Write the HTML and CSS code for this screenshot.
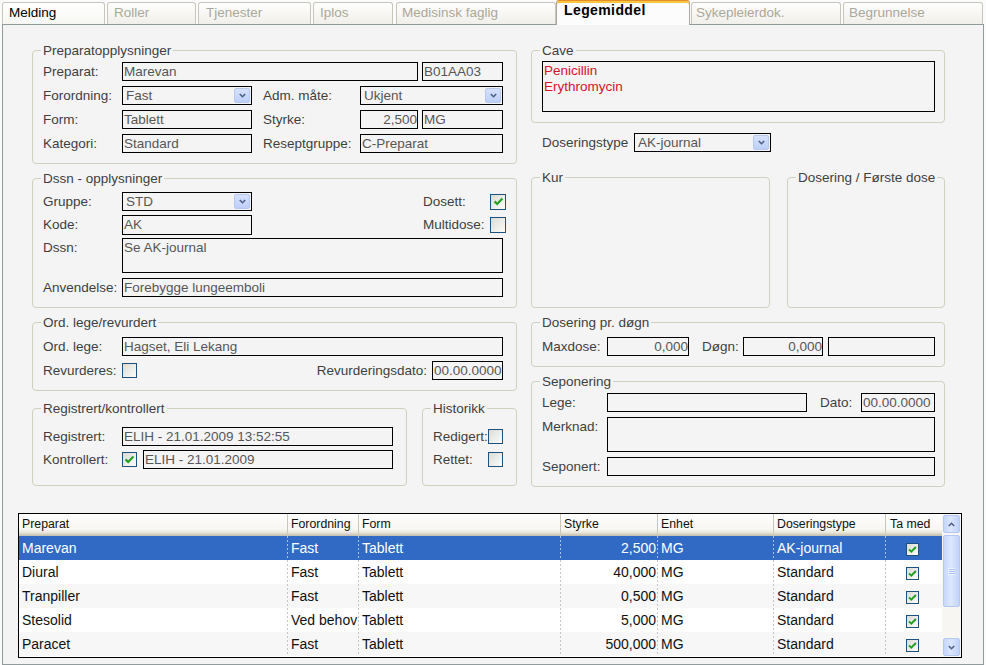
FILE: index.html
```html
<!DOCTYPE html>
<html lang="no">
<head>
<meta charset="utf-8">
<title>Legemiddel</title>
<link rel="stylesheet" href="styles.css">
</head>
<body>
<nav class="tabs">
  <div class="tab t1 enabled">Melding</div>
  <div class="tab t2">Roller</div>
  <div class="tab t3">Tjenester</div>
  <div class="tab t4">Iplos</div>
  <div class="tab t5">Medisinsk faglig</div>
  <div class="tab t6 active">Legemiddel</div>
  <div class="tab t7">Sykepleierdok.</div>
  <div class="tab t8">Begrunnelse</div>
</nav>
<main class="panel">
  <div class="form">
    <div class="col-left">
      <fieldset class="group">
        <legend>Preparatopplysninger</legend>
        <div class="body b-prep">
          <div class="row">
            <span class="lbl w79">Preparat:</span>
            <div class="field w296">Marevan</div>
            <div class="field grow ml4">B01AA03</div>
          </div>
          <div class="row">
            <span class="lbl w79">Forordning:</span>
            <div class="field select w130"><span>Fast</span><span class="ddbtn"><svg width="7" height="5" viewBox="0 0 7 5"><path d="M0.8 1 L3.5 3.7 L6.2 1" fill="none" stroke="#4d6185" stroke-width="1.6"/></svg></span></div>
            <span class="lbl w97 ml11">Adm. måte:</span>
            <div class="field select grow"><span>Ukjent</span><span class="ddbtn"><svg width="7" height="5" viewBox="0 0 7 5"><path d="M0.8 1 L3.5 3.7 L6.2 1" fill="none" stroke="#4d6185" stroke-width="1.6"/></svg></span></div>
          </div>
          <div class="row">
            <span class="lbl w79">Form:</span>
            <div class="field w130">Tablett</div>
            <span class="lbl w97 ml11">Styrke:</span>
            <div class="field num w58">2,500</div>
            <div class="field grow ml4">MG</div>
          </div>
          <div class="row">
            <span class="lbl w79">Kategori:</span>
            <div class="field w130">Standard</div>
            <span class="lbl w97 ml11">Reseptgruppe:</span>
            <div class="field grow">C-Preparat</div>
          </div>
        </div>
      </fieldset>

      <fieldset class="group mt7">
        <legend>Dssn - opplysninger</legend>
        <div class="body b-dssn">
          <div class="row">
            <span class="lbl w79">Gruppe:</span>
            <div class="field select w130"><span>STD</span><span class="ddbtn"><svg width="7" height="5" viewBox="0 0 7 5"><path d="M0.8 1 L3.5 3.7 L6.2 1" fill="none" stroke="#4d6185" stroke-width="1.6"/></svg></span></div>
            <div class="right">
              <span class="lbl w67">Dosett:</span>
              <span class="chk big"><svg width="13" height="13" viewBox="0 0 13 13"><path d="M2.6 6.4 L5.2 9 L10.4 3.6" fill="none" stroke="#21a121" stroke-width="2.2"/></svg></span>
            </div>
          </div>
          <div class="row">
            <span class="lbl w79">Kode:</span>
            <div class="field w130 tall">AK</div>
            <div class="right">
              <span class="lbl w67">Multidose:</span>
              <span class="chk big"></span>
            </div>
          </div>
          <div class="row row-area">
            <span class="lbl w79 top">Dssn:</span>
            <div class="field area grow">Se AK-journal</div>
          </div>
          <div class="row mt1">
            <span class="lbl w79">Anvendelse:</span>
            <div class="field grow">Forebygge lungeemboli</div>
          </div>
        </div>
      </fieldset>

      <fieldset class="group mt7">
        <legend>Ord. lege/revurdert</legend>
        <div class="body b-ord">
          <div class="row">
            <span class="lbl w79">Ord. lege:</span>
            <div class="field grow">Hagset, Eli Lekang</div>
          </div>
          <div class="row">
            <span class="lbl w79">Revurderes:</span>
            <span class="chk"></span>
            <span class="lbl auto mr5">Revurderingsdato:</span>
            <div class="field w71">00.00.0000</div>
          </div>
        </div>
      </fieldset>

      <div class="pair mt10">
        <fieldset class="group g-reg">
          <legend>Registrert/kontrollert</legend>
          <div class="body b-reg">
            <div class="row">
              <span class="lbl w79">Registrert:</span>
              <div class="field grow">ELIH - 21.01.2009 13:52:55</div>
            </div>
            <div class="row">
              <span class="lbl w79">Kontrollert:</span>
              <span class="chk"><svg width="13" height="13" viewBox="0 0 13 13"><path d="M2.6 6.4 L5.2 9 L10.4 3.6" fill="none" stroke="#21a121" stroke-width="2.2"/></svg></span>
              <div class="field grow ml6">ELIH - 21.01.2009</div>
            </div>
          </div>
        </fieldset>
        <fieldset class="group g-hist">
          <legend>Historikk</legend>
          <div class="body b-reg">
            <div class="row">
              <span class="lbl w55">Redigert:</span>
              <span class="chk"></span>
            </div>
            <div class="row">
              <span class="lbl w55">Rettet:</span>
              <span class="chk"></span>
            </div>
          </div>
        </fieldset>
      </div>
    </div>

    <div class="col-right">
      <fieldset class="group g-r">
        <legend>Cave</legend>
        <div class="body b-cave">
          <div class="field cave">Penicillin<br>Erythromycin</div>
        </div>
      </fieldset>

      <div class="row dose-type">
        <span class="lbl w92">Doseringstype</span>
        <div class="field select w137"><span>AK-journal</span><span class="ddbtn"><svg width="7" height="5" viewBox="0 0 7 5"><path d="M0.8 1 L3.5 3.7 L6.2 1" fill="none" stroke="#4d6185" stroke-width="1.6"/></svg></span></div>
      </div>

      <div class="pair kur-row">
        <fieldset class="group g-kur">
          <legend>Kur</legend>
          <div class="empty"></div>
        </fieldset>
        <fieldset class="group g-first">
          <legend>Dosering / Første dose</legend>
          <div class="empty"></div>
        </fieldset>
      </div>

      <fieldset class="group g-r mt7">
        <legend>Dosering pr. døgn</legend>
        <div class="body b-ord">
          <div class="row">
            <span class="lbl w65">Maxdose:</span>
            <div class="field num w82">0,000</div>
            <span class="lbl w41 ml13">Døgn:</span>
            <div class="field num w80">0,000</div>
            <div class="field grow ml5"></div>
          </div>
        </div>
      </fieldset>

      <fieldset class="group g-r mt7">
        <legend>Seponering</legend>
        <div class="body b-sep">
          <div class="row">
            <span class="lbl w65">Lege:</span>
            <div class="field w200"></div>
            <span class="lbl w41 ml13">Dato:</span>
            <div class="field grow">00.00.0000</div>
          </div>
          <div class="row row-area">
            <span class="lbl w65 top">Merknad:</span>
            <div class="field area grow"></div>
          </div>
          <div class="row">
            <span class="lbl w65">Seponert:</span>
            <div class="field grow"></div>
          </div>
        </div>
      </fieldset>
    </div>
  </div>

  <div class="grid">
    <table>
      <colgroup>
        <col class="c1"><col class="c2"><col class="c3"><col class="c4"><col class="c5"><col class="c6"><col class="c7">
      </colgroup>
      <thead>
        <tr><th>Preparat</th><th>Forordning</th><th>Form</th><th>Styrke</th><th>Enhet</th><th>Doseringstype</th><th class="last">Ta med</th></tr>
      </thead>
      <tbody>
        <tr class="sel"><td>Marevan</td><td>Fast</td><td>Tablett</td><td class="num">2,500</td><td>MG</td><td>AK-journal</td><td class="last"><span class="chk sm"><svg width="11" height="11" viewBox="0 0 11 11"><path d="M2 5.4 L4.3 7.7 L8.9 3" fill="none" stroke="#21a121" stroke-width="2"/></svg></span></td></tr>
        <tr><td>Diural</td><td>Fast</td><td>Tablett</td><td class="num">40,000</td><td>MG</td><td>Standard</td><td class="last"><span class="chk sm"><svg width="11" height="11" viewBox="0 0 11 11"><path d="M2 5.4 L4.3 7.7 L8.9 3" fill="none" stroke="#21a121" stroke-width="2"/></svg></span></td></tr>
        <tr class="alt"><td>Tranpiller</td><td>Fast</td><td>Tablett</td><td class="num">0,500</td><td>MG</td><td>Standard</td><td class="last"><span class="chk sm"><svg width="11" height="11" viewBox="0 0 11 11"><path d="M2 5.4 L4.3 7.7 L8.9 3" fill="none" stroke="#21a121" stroke-width="2"/></svg></span></td></tr>
        <tr><td>Stesolid</td><td>Ved behov</td><td>Tablett</td><td class="num">5,000</td><td>MG</td><td>Standard</td><td class="last"><span class="chk sm"><svg width="11" height="11" viewBox="0 0 11 11"><path d="M2 5.4 L4.3 7.7 L8.9 3" fill="none" stroke="#21a121" stroke-width="2"/></svg></span></td></tr>
        <tr class="alt"><td>Paracet</td><td>Fast</td><td>Tablett</td><td class="num">500,000</td><td>MG</td><td>Standard</td><td class="last"><span class="chk sm"><svg width="11" height="11" viewBox="0 0 11 11"><path d="M2 5.4 L4.3 7.7 L8.9 3" fill="none" stroke="#21a121" stroke-width="2"/></svg></span></td></tr>
      </tbody>
    </table>
    <div class="vscroll">
      <div class="sb-btn"><svg width="7" height="5" viewBox="0 0 7 5"><path d="M0.8 4 L3.5 1.3 L6.2 4" fill="none" stroke="#4d6185" stroke-width="1.6"/></svg></div>
      <div class="sb-thumb"><svg width="7" height="7" viewBox="0 0 7 7"><rect x="0" y="0" width="7" height="1" fill="#eef4fe"/><rect x="0" y="2" width="7" height="1" fill="#eef4fe"/><rect x="0" y="4" width="7" height="1" fill="#eef4fe"/><rect x="0" y="6" width="7" height="1" fill="#eef4fe"/><rect x="1" y="1" width="7" height="1" fill="#a8bff0"/><rect x="1" y="3" width="7" height="1" fill="#a8bff0"/><rect x="1" y="5" width="7" height="1" fill="#a8bff0"/></svg></div>
      <div class="sb-track"></div>
      <div class="sb-btn"><svg width="7" height="5" viewBox="0 0 7 5"><path d="M0.8 1 L3.5 3.7 L6.2 1" fill="none" stroke="#4d6185" stroke-width="1.6"/></svg></div>
    </div>
  </div>
</main>
</body>
</html>
```

FILE: styles.css
```css
* { box-sizing: border-box; }
html, body { margin: 0; height: 100%; }
body {
  background: #fbfbfb;
  font-family: "Liberation Sans", Arial, sans-serif;
  font-size: 13.5px;
  color: #3f3f3f;
  overflow: hidden;
}

/* ---------- tabs ---------- */
.tabs {
  display: flex;
  align-items: flex-end;
  height: 24px;
  padding-left: 2px;
}
.tab {
  height: 22px;
  border: 1px solid #c8c6bb;
  border-bottom: none;
  border-radius: 3px 3px 0 0;
  background: linear-gradient(#fefefe, #f0efea);
  color: #aca899;
  padding-left: 6px;
  line-height: 20px;
  white-space: nowrap;
  overflow: hidden;
  margin-right: 2px;
  flex: none;
}
.tab.enabled { color: #000; background: linear-gradient(#ffffff, #f6f6f3); }
.t1 { width: 103px; }
.t2 { width: 89px; }
.t3 { width: 113px; padding-left: 7px; }
.t4 { width: 80px; margin-right: 3px; }
.t5 { width: 160px; margin-right: 0; padding-left: 5px; }
.t6 { width: 134px; margin-right: 1px; }
.t7 { width: 150px; padding-left: 4px; }
.t8 { width: 140px; padding-left: 5px; margin-right: 0; }
.tab.active {
  height: 25px;
  margin-bottom: -1px;
  position: relative;
  z-index: 1;
  border-color: #a8a7a0;
  border-top: 1px solid #e68b2c;
  box-shadow: inset 0 2px 0 #ffc83c;
  background: #fcfcfc;
  color: #000;
  font-weight: bold;
  font-size: 14px;
  letter-spacing: 0.4px;
  line-height: 19px;
  padding-left: 7px;
}

/* ---------- panel ---------- */
.panel {
  display: block;
  margin-left: 2px;
  width: 982px;
  height: 641px;
  border: 1px solid #919b9c;
  background: #f4f4f4;
  padding: 18px 0 0 15px;
}
.form {
  display: flex;
  gap: 14px;
  margin-left: 14px;
}
.col-left { width: 485px; flex: none; }
.col-right { width: 414px; flex: none; }

.group {
  margin: 0;
  min-width: 0;
  border: 1px solid #d0d0bf;
  border-radius: 4px;
  padding: 0 13px 10px 10px;
}
.group legend {
  padding: 0 2px;
  margin-left: -2px;
  line-height: 15px;
  color: #3f3f3f;
}
.mt7 { margin-top: 7px; }
.mt10 { margin-top: 10px; }
.mt1 { margin-top: 1px; }

.body { display: flex; flex-direction: column; }
.b-prep { padding-top: 4px; gap: 5px; }
.b-dssn { padding-top: 6px; gap: 4px; }
.b-ord { padding-top: 7px; gap: 5px; }
.g-reg, .g-hist { padding-bottom: 16px; }
.b-reg { padding-top: 11px; gap: 4px; }
.b-cave { padding-top: 3px; }
.b-sep { padding-top: 4px; gap: 5px; }
.g-r { padding-right: 9px; }

.pair { display: flex; gap: 15px; }
.g-reg { width: 375px; flex: none; }
.g-hist { flex: 1; }
.kur-row { gap: 17px; margin-top: 18px; }
.g-kur { width: 239px; flex: none; padding: 0; }
.g-first { flex: 1; padding: 0; }
.g-kur legend { margin-left: 8px; }
.g-first legend { margin-left: 8px; }
.empty { height: 122px; }

/* ---------- rows & controls ---------- */
.row { display: flex; align-items: center; height: 19px; }
.row-area { height: 35px; align-items: flex-start; }
.lbl { flex: none; white-space: nowrap; line-height: 17px; }
.lbl.top { padding-top: 1px; }
.lbl.auto { margin-left: auto; }
.right { margin-left: auto; margin-right: -3px; display: flex; align-items: center; }

.w41 { width: 41px; }
.w55 { width: 55px; }
.w58 { width: 58px; }
.w65 { width: 65px; }
.w67 { width: 67px; }
.w71 { width: 71px; }
.w79 { width: 79px; }
.w80 { width: 80px; }
.w82 { width: 82px; }
.w92 { width: 92px; }
.w97 { width: 97px; }
.w130 { width: 130px; }
.w137 { width: 137px; }
.w200 { width: 200px; }
.w296 { width: 296px; }
.ml4 { margin-left: 4px; }
.ml5 { margin-left: 5px; }
.ml6 { margin-left: 6px; }
.ml11 { margin-left: 11px; }
.ml13 { margin-left: 13px; }
.mr5 { margin-right: 5px; }

.field {
  flex: none;
  height: 19px;
  border: 1px solid #000;
  background: #f4f4f4;
  color: #575757;
  padding: 0 1px;
  line-height: 17px;
  white-space: nowrap;
  overflow: hidden;
}
.field.tall { height: 20px; }
.field.grow, .grow { flex: 1 1 auto; min-width: 0; }
.field.num { text-align: right; padding-right: 0; }
.field.area { height: 35px; }
.field.cave {
  height: 51px;
  color: #d8102a;
  line-height: 16px;
  padding: 1px 1px 0;
}
.field.select {
  display: flex;
  align-items: center;
  justify-content: space-between;
  padding: 0 1px 0 3px;
}
.ddbtn {
  width: 16px;
  height: 15px;
  border: 1px solid #b7c8ee;
  border-radius: 2px;
  background: linear-gradient(#d6e1fd, #bdcff9);
  display: flex;
  align-items: center;
  justify-content: center;
}
.dose-type { margin-top: 10px; padding-left: 11px; }

.chk {
  flex: none;
  width: 15px;
  height: 15px;
  border: 1px solid #1c5180;
  background: linear-gradient(135deg, #dcdcd6, #fbfbf9);
  display: flex;
  align-items: center;
  justify-content: center;
}
.chk.big { width: 16px; height: 16px; }
.chk.sm {
  display: inline-flex;
  width: 13px;
  height: 13px;
  vertical-align: middle;
}

/* ---------- grid ---------- */
.grid {
  margin-top: 26px;
  width: 944px;
  height: 145px;
  border: 1px solid #000;
  background: #fff;
  display: flex;
}
.grid table {
  width: 923px;
  flex: none;
  table-layout: fixed;
  border-collapse: separate;
  border-spacing: 0;
  align-self: flex-start;
}
.c1 { width: 269px; }
.c2 { width: 71px; }
.c3 { width: 202px; }
.c4 { width: 97px; }
.c5 { width: 116px; }
.c6 { width: 112px; }
.c7 { width: 56px; }
.grid th {
  height: 22px;
  padding: 0 0 2px 3px;
  font-weight: normal;
  font-size: 12.3px;
  text-align: left;
  color: #111;
  white-space: nowrap;
  overflow: hidden;
  background: linear-gradient(#ffffff 0%, #f7f6f2 70%, #e6e3d6 86%, #d2cebf 93%, #c3bfb0 100%);
  border-right: 1px solid #cbc8ba;
}
.grid th.last { border-right: none; padding-left: 4px; }
.grid td {
  --dash: #c4c4c4;
  height: 24px;
  padding: 0 1px 0 3px;
  font-size: 14px;
  font-weight: normal;
  color: #111;
  white-space: nowrap;
  overflow: hidden;
  background-color: #fff;
  background-image: repeating-linear-gradient(to bottom, var(--dash) 0 2px, transparent 2px 4px);
  background-size: 1px 100%;
  background-position: right top;
  background-repeat: no-repeat;
}
.grid td.num { text-align: right; padding-right: 2px; }
.grid td.last { background-image: none; text-align: center; padding: 0 3px 0 0; }
.grid tr.alt td { background-color: #f7f7f7; }
.grid tr.sel td { background-color: #316ac5; color: #fff; --dash: #a9c0ea; }

.vscroll {
  width: 19px;
  flex: none;
  display: flex;
  flex-direction: column;
  padding: 1px 1px;
  background: #f7f6f2;
}
.sb-btn {
  height: 18px;
  border: 1px solid #b5c8f3;
  border-radius: 2px;
  background: linear-gradient(90deg, #c5d5fc, #dbe5fe 45%, #c0d1fa);
  display: flex;
  align-items: center;
  justify-content: center;
}
.sb-thumb {
  margin-top: 2px;
  height: 72px;
  border: 1px solid #b5c8f3;
  border-radius: 2px;
  background: linear-gradient(90deg, #c8d7fc, #dde7fe 45%, #c3d3fa);
  display: flex;
  align-items: center;
  justify-content: center;
}
.sb-track { flex: 1; }
```
